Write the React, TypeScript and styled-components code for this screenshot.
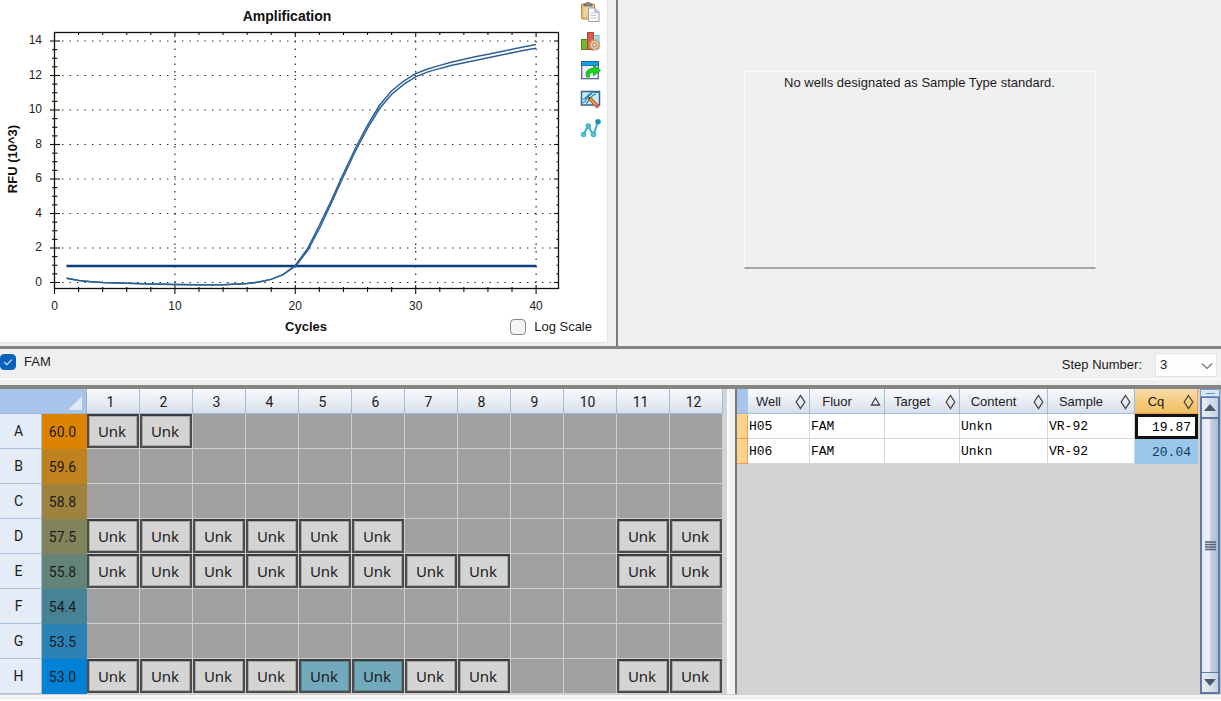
import React from "react";
import styled, { createGlobalStyle } from "styled-components";

const GlobalStyle = createGlobalStyle`
  *, *::before, *::after { box-sizing: border-box; }
  body {
    margin: 0;
    background: #ffffff;
    color: #1b1b1b;
    font: 13px/18px "Liberation Sans", Arial, sans-serif;
  }
  button, select, input { font: inherit; color: inherit; margin: 0; }
`;

const Page = styled.main`
  display: flex;
  flex-direction: column;
  min-height: 100vh;
`;

/* ---------- upper panes ---------- */

const UpperPanes = styled.section`
  display: grid;
  grid-template-columns: minmax(0, 618fr) minmax(0, 603fr);
  background: #f0f0f0;
  border-bottom: 3px solid #858585;
`;

const ChartPane = styled.div`
  padding: 0 8px 3px 0;
  border-right: 2px solid #7a7a7a;
`;

const ChartSurface = styled.div`
  height: 100%;
  background: #ffffff;
  border-right: 1px solid #e6e6e6;
  border-bottom: 1px solid #e6e6e6;
`;

const ChartRow = styled.div`
  display: grid;
  grid-template-columns: minmax(0, 570fr) minmax(0, 37fr);
`;

const ChartSvg = styled.svg`
  display: block;
  width: 100%;
  height: auto;
`;

const Tools = styled.div`
  display: flex;
  flex-direction: column;
  align-items: center;
  gap: 8px;
  padding: 2px 0 0 4px;
`;

const ToolButton = styled.button`
  width: 21px;
  height: 21px;
  padding: 0;
  border: 0;
  background: none;
  svg { display: block; }
`;

const ChartFooter = styled.div`
  display: grid;
  grid-template-columns: 1fr auto 1fr;
  align-items: center;
  height: 26px;
  padding: 0 15px 4px 20px;
`;

const AxisTitle = styled.span`
  grid-column: 2;
  font-weight: bold;
  color: #111111;
`;

const CheckLabel = styled.label`
  display: inline-flex;
  align-items: center;
  justify-self: end;
  gap: 8px;
`;

const CheckBox = styled.span`
  position: relative;
  display: flex;
  width: 16px;
  height: 16px;
  svg {
    position: absolute;
    inset: 0;
    pointer-events: none;
  }
`;

const CheckInput = styled.input`
  appearance: none;
  width: 16px;
  height: 16px;
  border: 1px solid #868686;
  border-radius: 4px;
  background: #f5f5f5;
  &:checked { background: #0a62bd; border-color: #0a62bd; }
  &:not(:checked) + svg { display: none; }
`;

const StandardPane = styled.div`
  display: flex;
  justify-content: center;
  align-items: flex-start;
  padding-top: 71px;
`;

const MessageBox = styled.div`
  width: 352px;
  max-width: 100%;
  min-height: 198px;
  padding: 2px 0;
  border: 1px solid #f9f9f9;
  border-bottom: 2px solid #a6a6a6;
  text-align: center;
`;

/* ---------- option bar ---------- */

const OptionBar = styled.section`
  display: flex;
  align-items: flex-start;
  justify-content: space-between;
  height: 29px;
  padding: 4px 4px 0 0;
  background: #f0f0f0;
`;

const StepLabel = styled.label`
  display: flex;
  align-items: center;
  gap: 13px;
`;

const SelectBox = styled.span`
  position: relative;
  display: flex;
  svg {
    position: absolute;
    right: 4px;
    top: 9px;
    pointer-events: none;
  }
`;

const StepSelect = styled.select`
  appearance: none;
  width: 62px;
  height: 24px;
  padding: 0 4px;
  border: 1px solid #e3e3e3;
  background: #fdfdfd;
`;

const HorizontalSplitter = styled.div`
  height: 11px;
  background: #f0f0f0;
  border-top: 2px solid #fafafa;
  border-bottom: 4px solid #858583;
`;

/* ---------- lower panes ---------- */

const LowerPanes = styled.section`
  display: flex;
  background: #d3d3d3;
  border-bottom: 1px solid #d3d3d3;
`;

const PlatePane = styled.div`
  flex: none;
  padding-right: 4px;
`;

const VerticalSplitter = styled.div`
  flex: none;
  width: 10px;
  background: #f0f0f0;
  border-left: 2px solid #fbfbfb;
  border-right: 2px solid #787878;
`;

const Plate = styled.table`
  table-layout: fixed;
  width: 723px;
  border-collapse: separate;
  border-spacing: 0;
  text-align: center;
  font: 14px/18px Roboto, "Liberation Sans", sans-serif;
  td, th { padding: 0; font-weight: normal; }
`;

const headerFill = "linear-gradient(#f8fafc, #e6ebf2 60%, #d5deeb)";

const PlateCorner = styled.td`
  height: 25px;
  background: #a9c4ea;
  border-right: 1px solid #93afcf;
  border-bottom: 1px solid #9db8d6;
  svg { display: block; margin: 3px 4px 0 auto; }
`;

const PlateColumn = styled.th`
  height: 25px;
  padding: 2px 5px 0 0 !important;
  background: ${headerFill};
  border-right: 1px solid #9fbcd8;
  border-bottom: 1px solid #a4bcd8;
`;

const PlateRow = styled.th`
  height: 35px;
  padding-right: 4px !important;
  background: #e4ecf7;
  border-right: 1px solid #a4bcd8;
  border-bottom: 1px solid #a9bfdd;
`;

const Temperature = styled.td<{ $fill: string }>`
  padding-right: 4px !important;
  background: ${(p) => p.$fill};
`;

const PlateCell = styled.td`
  height: 35px;
  background: #a0a0a0;
  border-right: 1px solid #cfcfcf;
  border-bottom: 1px solid #cfcfcf;
`;

const Well = styled.div<{ $selected: boolean }>`
  display: flex;
  align-items: center;
  justify-content: center;
  height: 34px;
  padding-right: 2px;
  border: 2px solid #4c4c4c;
  border-top-color: #3a3a3a;
  background: ${(p) => (p.$selected ? "#72a9bb" : "#d4d4d4")};
  box-shadow: inset 0 0 0 1px ${(p) => (p.$selected ? "#5b8794" : "#aaaaaa")};
  font: 15px/20px "Noto Sans", sans-serif;
`;

const ResultsPane = styled.div`
  flex: 1;
  min-width: 0;
  display: flex;
  justify-content: space-between;
`;

const Results = styled.table`
  align-self: flex-start;
  table-layout: fixed;
  width: 461px;
  border-collapse: separate;
  border-spacing: 0;
  td, th { padding: 0; font-weight: normal; }
`;

const ResultsCorner = styled.td`
  height: 25px;
  background: #a9c4ea;
  border-bottom: 1px solid #9db8d6;
`;

const ResultColumn = styled.th<{ $active: boolean }>`
  height: 25px;
  background: ${(p) => (p.$active ? "linear-gradient(#f8dcae, #f5c978 60%, #f3bf62)" : headerFill)};
  border-right: 1px solid ${(p) => (p.$active ? "#ee9a50" : "#9fbcd8")};
  border-bottom: 1px solid ${(p) => (p.$active ? "#ee9a50" : "#a4bcd8")};
`;

const SortButton = styled.button`
  display: flex;
  align-items: center;
  width: 100%;
  height: 24px;
  padding: 2px 3px 0 0;
  border: 0;
  background: none;
  span { flex: 1; padding-right: 6px; text-align: center; }
  svg { flex: none; }
`;

const RowMarker = styled.td`
  height: 25px;
  background: #ffd28c;
  border-right: 1px solid #f0a050;
  border-bottom: 1px solid #f0a050;
`;

const ResultCell = styled.td`
  height: 25px;
  padding: 2px 0 0 1px !important;
  background: #ffffff;
  border-right: 1px solid #d6d6d6;
  border-bottom: 1px solid #d6d6d6;
  font: 13px/18px "Liberation Mono", monospace;
  color: #000000;
`;

const CqCell = styled(ResultCell)<{ $current: boolean }>`
  padding-right: ${(p) => (p.$current ? "4px" : "6px")} !important;
  text-align: right;
  border: ${(p) => (p.$current ? "3px solid #111111" : "1px solid #99c8ec")};
  background: ${(p) => (p.$current ? "#ffffff" : "#99c8ec")};
  color: ${(p) => (p.$current ? "#000000" : "#123c5c")};
  line-height: 16px;
`;

const ScrollBar = styled.div`
  display: flex;
  flex-direction: column;
  width: 21px;
  border: 1px solid #b4c1d6;
  border-width: 0 1px 0 0;
`;

const SplitHandle = styled.div`
  display: flex;
  align-items: center;
  justify-content: center;
  height: 8px;
  border: 1px solid #6f9fd2;
  background: #d8e8f8;
  &::after {
    content: "";
    width: 9px;
    height: 1px;
    background: #5f94cc;
  }
`;

const ScrollButton = styled.button`
  display: flex;
  align-items: center;
  justify-content: center;
  height: 22px;
  padding: 0;
  border: 2px solid #5f78a4;
  border-top-width: 1px;
  background: linear-gradient(90deg, #e9eef5, #c6d2e2);
`;

const ScrollThumb = styled.div`
  flex: 1;
  display: flex;
  align-items: center;
  justify-content: center;
  border: 2px solid #5f78a4;
  border-width: 0 2px;
  background: linear-gradient(90deg, #e3e8f1, #edf1f6 45%, #c5d1df 55%, #adbdd2);
`;

const BottomEdge = styled.footer`
  height: 4px;
  background: #f4f4f4;
  border-bottom: 1px solid #e6e6e6;
`;

/* ---------- amplification chart ---------- */

const cycleX = (c: number) => 54.5 + 12.04 * c;
const rfuY = (v: number) => 282.5 - 17.25 * v;
const range = (n: number) => Array.from({ length: n }, (_, i) => i);

const BASELINE = "66.5,278.3 79,280.6 91,281.8 103,282.6 127,283.3 151,283.9 175,284.5 199,284.8 223,284.7 247,283.6 259,282 271,279.4 283,274.6";
const UPPER = `${BASELINE} 295,265.6 307,249.5 319,226 331,201 343,174.5 355,149 367,126 379,106 391,91.5 403,81.5 415,73.8 427,69.3 439,65.6 451,62.3 463,59.4 475,56.8 487,54.4 499,52 511,49.6 523,47 536,44.5`;
const LOWER = `${BASELINE} 296,265.8 308,250 320.2,227 332,201.8 344,175.3 356,150 368,127.3 380,108 392,94 404,84.2 416,76.6 428,71.9 440,68.4 451,65.6 463,62.9 475,60.4 487,58 499,55.5 511,53 523,50.5 536,48.2`;

function AmplificationChart() {
  return (
    <ChartSvg viewBox="0 0 570 316" role="img" aria-label="Amplification" fontFamily="Liberation Sans, sans-serif" fontSize="12" fill="#222">
      <text x="287" y="21" textAnchor="middle" fontSize="14" fontWeight="bold" fill="#111">Amplification</text>
      <text transform="translate(17 159) rotate(-90)" textAnchor="middle" fontSize="13" fontWeight="bold" fill="#111">RFU (10^3)</text>
      <g stroke="#222" strokeWidth="1.2" strokeDasharray="1.4 6.1">
        {range(8).map((i) => <line key={i} x1="62" x2="556" y1={rfuY(i * 2)} y2={rfuY(i * 2)} />)}
        {[10, 20, 30, 40].map((c) => <line key={c} x1={cycleX(c)} x2={cycleX(c)} y1="41" y2="288" />)}
      </g>
      <rect x="54.5" y="32.5" width="504" height="256" fill="none" stroke="#111" strokeWidth="1.3" />
      <g stroke="#111" strokeWidth="1.1">
        {range(29).map((i) => {
          const y = rfuY(i / 2);
          const major = i % 4 === 0;
          return (
            <React.Fragment key={i}>
              <line x1={major ? 50 : 52} x2={major ? 60 : 57.5} y1={y} y2={y} />
              <line x1={major ? 554 : 556.5} x2="558" y1={y} y2={y} />
            </React.Fragment>
          );
        })}
        {range(21).map((i) => {
          const x = cycleX(i * 2);
          const major = i % 5 === 0;
          return (
            <React.Fragment key={i}>
              <line x1={x} x2={x} y1={major ? 285 : 287} y2={major ? 294 : 292} />
              <line x1={x} x2={x} y1="33" y2={major ? 37 : 35} />
            </React.Fragment>
          );
        })}
      </g>
      {range(8).map((i) => <text key={i} x="42" y={rfuY(i * 2) + 3} textAnchor="end">{i * 2}</text>)}
      {range(5).map((i) => <text key={i} x={cycleX(i * 10)} y="310" textAnchor="middle">{i * 10}</text>)}
      <line x1="66.5" x2="536.5" y1="266" y2="266" stroke="#083f7c" strokeWidth="2.4" />
      <polyline points={UPPER} fill="none" stroke="#2c6298" strokeWidth="1.5" />
      <polyline points={LOWER} fill="none" stroke="#2c6298" strokeWidth="1.5" />
    </ChartSvg>
  );
}

/* ---------- icons ---------- */

const iconProps = { width: 21, height: 21, viewBox: "0 0 21 21", "aria-hidden": true } as const;

const PasteIcon = () => (
  <svg {...iconProps}>
    <rect x="1.5" y="2" width="13" height="15" rx="1" fill="#e2bb76" stroke="#b88d49" />
    <rect x="3.5" y="4" width="9" height="11" fill="#ecd3a2" />
    <path d="M4 4V2h2V.8h4V2h2v2z" fill="#8b8b8b" stroke="#5d5d5d" strokeWidth=".7" />
    <path d="M8.5 6h6.5l4 4v9.5H8.5z" fill="#fbfbfd" stroke="#9a9ea8" />
    <path d="M15 6v4h4" fill="#dfe2e8" stroke="#9a9ea8" />
    <path d="M10.5 11h6M10.5 13.5h6M10.5 16h6" stroke="#c2cbd7" />
  </svg>
);

const ChartGearIcon = () => (
  <svg {...iconProps}>
    <rect x="1.5" y="8.5" width="6" height="10" fill="#78b82b" stroke="#4f851c" />
    <rect x="13.5" y="4.5" width="5.5" height="13" fill="#a5dcec" stroke="#70b5cb" />
    <rect x="7.5" y="1.5" width="6" height="17" fill="#d9604d" stroke="#b54234" />
    <circle cx="14.5" cy="14" r="5" fill="none" stroke="#c9a577" strokeWidth="2" strokeDasharray="2.2 1.72" />
    <circle cx="14.5" cy="14" r="4.4" fill="#e7c99c" stroke="#c09b6c" strokeWidth=".8" />
    <circle cx="14.5" cy="14" r="1.8" fill="#f6f0e6" stroke="#9b7d59" />
  </svg>
);

const ExportIcon = () => (
  <svg {...iconProps}>
    <rect x="1.7" y="1.7" width="16.6" height="17" fill="#eef0f6" stroke="#4d5c8c" strokeWidth="1.2" />
    <rect x="1.5" y="1.5" width="17" height="4" fill="#12a1e2" stroke="#175d9e" strokeWidth=".8" />
    <path d="M6.5 17c-1.500-5.500 1.500-8.500 7-8.700V5l7 5.500-7 5.300v-3.500c-3.500 0-4.500 1.500-4 4.700z" fill="#16d71c" stroke="#129a27" strokeWidth=".8" />
  </svg>
);

const EditChartIcon = () => (
  <svg {...iconProps}>
    <rect x="1.5" y="2.5" width="18" height="13.5" fill="#c7ecf5" stroke="#405c92" strokeWidth="1.5" />
    <path d="M2.500 14c4-1 6-10.500 12-10.500h4M3 10.500c4-1 5-6 9-7M6 14.500c3-2 4-8 10-9.500" fill="none" stroke="#2789a4" strokeWidth="1.2" />
    <path d="M9.500 9l7.500 8" stroke="#a84f1b" strokeWidth="4" />
    <path d="M9.500 9l7 7.500" stroke="#f29340" strokeWidth="2.5" />
    <path d="M16 16l2.300 2.500" stroke="#d5606c" strokeWidth="3.6" />
    <path d="M8 7.500l1 3.200 2-2z" fill="#3d322b" />
  </svg>
);

const TrendIcon = () => (
  <svg {...iconProps}>
    <path d="M3.5 17L8 7.800l5.500 9.200L18 3.500" fill="none" stroke="#3baed0" strokeWidth="2" />
    <g fill="#54bfdd" stroke="#2c9cbf" strokeWidth=".7">
      <circle cx="3.5" cy="16.5" r="2.4" />
      <circle cx="8.3" cy="8" r="2.4" />
      <circle cx="13.5" cy="16.5" r="2.4" />
      <circle cx="18" cy="3.7" r="2.5" fill="#168fb5" />
    </g>
  </svg>
);

const TOOLS = [
  { label: "Copy", Icon: PasteIcon },
  { label: "Chart settings", Icon: ChartGearIcon },
  { label: "Export", Icon: ExportIcon },
  { label: "Edit trace style", Icon: EditChartIcon },
  { label: "Data points", Icon: TrendIcon },
];

const SortMark = ({ ascending }: { ascending: boolean }) => (
  <svg width="11" height="16" viewBox="0 0 11 16" fill="none" stroke="#454545" strokeWidth="1.3" aria-hidden>
    {ascending ? <path d="M1.500 11L5.500 4l4 7z" /> : <path d="M5.500 1.500L9.800 8l-4.300 6.500L1.200 8z" />}
  </svg>
);

/* ---------- data ---------- */

const PLATE_ROWS = [
  { name: "A", temp: "60.0", fill: "#dd8302", wells: [1, 2] },
  { name: "B", temp: "59.6", fill: "#c0821f", wells: [] },
  { name: "C", temp: "58.8", fill: "#9f823d", wells: [] },
  { name: "D", temp: "57.5", fill: "#81845b", wells: [1, 2, 3, 4, 5, 6, 11, 12] },
  { name: "E", temp: "55.8", fill: "#658478", wells: [1, 2, 3, 4, 5, 6, 7, 8, 11, 12] },
  { name: "F", temp: "54.4", fill: "#478396", wells: [] },
  { name: "G", temp: "53.5", fill: "#2a82b6", wells: [] },
  { name: "H", temp: "53.0", fill: "#0081d5", wells: [1, 2, 3, 4, 5, 6, 7, 8, 11, 12] },
];

const COLUMNS = [
  { name: "Well", width: 62 },
  { name: "Fluor", width: 75 },
  { name: "Target", width: 75 },
  { name: "Content", width: 88 },
  { name: "Sample", width: 87 },
  { name: "Cq", width: 63 },
];

const RESULTS = [
  { cells: ["H05", "FAM", "", "Unkn", "VR-92"], cq: "19.87" },
  { cells: ["H06", "FAM", "", "Unkn", "VR-92"], cq: "20.04" },
];

function Check({ label, checked = false }: { label: string; checked?: boolean }) {
  return (
    <CheckLabel>
      <CheckBox>
        <CheckInput type="checkbox" defaultChecked={checked} />
        <svg width="16" height="16" viewBox="0 0 16 16" fill="none" stroke="#d8e9fa" strokeWidth="1.2" aria-hidden>
          <path d="M4.300 8.200l2.500 2.500 5-5" />
        </svg>
      </CheckBox>
      {label}
    </CheckLabel>
  );
}

export default function App() {
  return (
    <>
      <GlobalStyle />
      <Page>
        <UpperPanes>
          <ChartPane>
            <ChartSurface>
              <ChartRow>
                <AmplificationChart />
                <Tools>
                  {TOOLS.map(({ label, Icon }) => (
                    <ToolButton key={label} type="button" aria-label={label}><Icon /></ToolButton>
                  ))}
                </Tools>
              </ChartRow>
              <ChartFooter>
                <AxisTitle>Cycles</AxisTitle>
                <Check label="Log Scale" />
              </ChartFooter>
            </ChartSurface>
          </ChartPane>
          <StandardPane>
            <MessageBox>No wells designated as Sample Type standard.</MessageBox>
          </StandardPane>
        </UpperPanes>

        <OptionBar>
          <Check label="FAM" checked />
          <StepLabel>
            Step Number:
            <SelectBox>
              <StepSelect defaultValue="3">
                <option>1</option>
                <option>2</option>
                <option>3</option>
              </StepSelect>
              <svg width="12" height="8" viewBox="0 0 12 8" fill="none" stroke="#777" strokeWidth="1.2" aria-hidden>
                <path d="M1 1.500l5 5 5-5" />
              </svg>
            </SelectBox>
          </StepLabel>
        </OptionBar>
        <HorizontalSplitter />

        <LowerPanes>
          <PlatePane>
            <Plate>
              <colgroup>
                <col width="42" />
                <col width="45" />
                {range(12).map((i) => <col key={i} width="53" />)}
              </colgroup>
              <thead>
                <tr>
                  <PlateCorner colSpan={2}>
                    <svg width="14" height="14" viewBox="0 0 14 14" aria-hidden><path d="M14 0v14H0z" fill="#dfe9f8" /></svg>
                  </PlateCorner>
                  {range(12).map((i) => <PlateColumn key={i} scope="col">{i + 1}</PlateColumn>)}
                </tr>
              </thead>
              <tbody>
                {PLATE_ROWS.map((row) => (
                  <tr key={row.name}>
                    <PlateRow scope="row">{row.name}</PlateRow>
                    <Temperature $fill={row.fill}>{row.temp}</Temperature>
                    {range(12).map((i) => (
                      <PlateCell key={i}>
                        {(row.wells as number[]).includes(i + 1) && (
                          <Well $selected={row.name === "H" && (i === 4 || i === 5)}>Unk</Well>
                        )}
                      </PlateCell>
                    ))}
                  </tr>
                ))}
              </tbody>
            </Plate>
          </PlatePane>
          <VerticalSplitter />
          <ResultsPane>
            <Results>
              <colgroup>
                <col width="11" />
                {COLUMNS.map((c) => <col key={c.name} width={c.width} />)}
              </colgroup>
              <thead>
                <tr>
                  <ResultsCorner />
                  {COLUMNS.map((c) => (
                    <ResultColumn key={c.name} scope="col" $active={c.name === "Cq"}>
                      <SortButton type="button">
                        <span>{c.name}</span>
                        <SortMark ascending={c.name === "Fluor"} />
                      </SortButton>
                    </ResultColumn>
                  ))}
                </tr>
              </thead>
              <tbody>
                {RESULTS.map((r, n) => (
                  <tr key={r.cq}>
                    <RowMarker />
                    {r.cells.map((text, i) => <ResultCell key={i}>{text}</ResultCell>)}
                    <CqCell $current={n === 0}>{r.cq}</CqCell>
                  </tr>
                ))}
              </tbody>
            </Results>
            <ScrollBar>
              <SplitHandle />
              <ScrollButton type="button" aria-label="Scroll up">
                <svg width="12" height="7" viewBox="0 0 12 7" aria-hidden><path d="M6 0l6 7H0z" fill="#4d5873" /></svg>
              </ScrollButton>
              <ScrollThumb>
                <svg width="11" height="10" viewBox="0 0 11 10" stroke="#56607a" strokeWidth="1.5" aria-hidden>
                  <path d="M0 1h11M0 3.500h11M0 6h11M0 8.500h11" />
                </svg>
              </ScrollThumb>
              <ScrollButton type="button" aria-label="Scroll down">
                <svg width="12" height="7" viewBox="0 0 12 7" aria-hidden><path d="M0 0h12L6 7z" fill="#4d5873" /></svg>
              </ScrollButton>
            </ScrollBar>
          </ResultsPane>
        </LowerPanes>
        <BottomEdge />
      </Page>
    </>
  );
}
